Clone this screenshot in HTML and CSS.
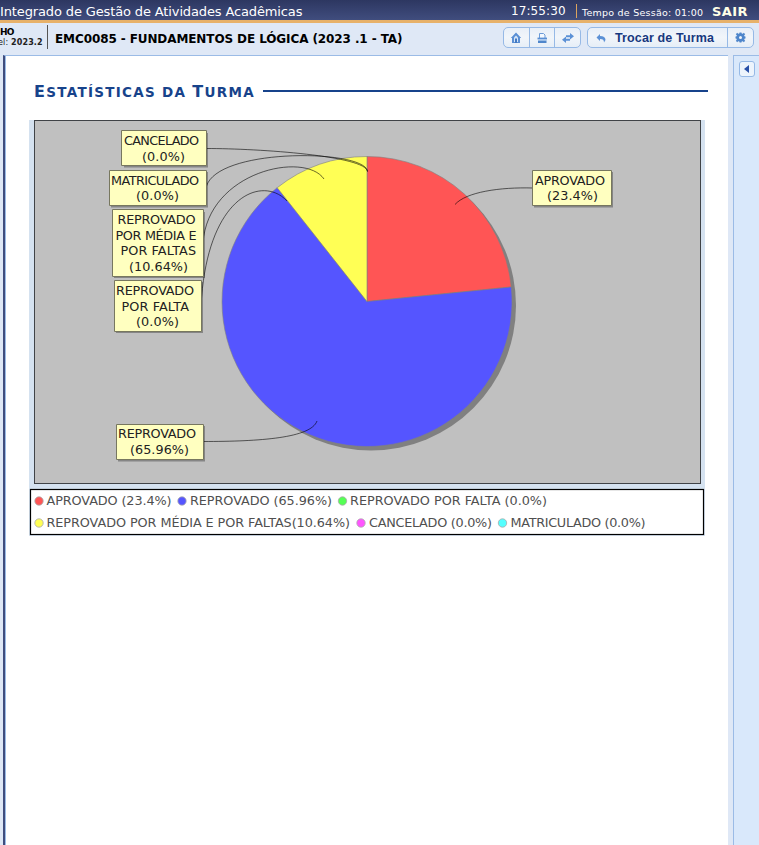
FILE: index.html
```html
<!DOCTYPE html>
<html lang="pt-BR">
<head>
<meta charset="utf-8">
<title>Estatísticas da Turma</title>
<link rel="stylesheet" href="styles.css">
</head>
<body>
<header class="topbar">
  <span class="system">Integrado de Gestão de Atividades Acadêmicas</span>
  <span class="clock">17:55:30</span>
  <span class="session">Tempo de Sessão: 01:00</span>
  <a class="logout">SAIR</a>
</header>
<div class="classbar">
  <div class="user"><b class="name">HO</b><span class="period">el: <b>2023.2</b></span></div>
  <h1 class="course">EMC0085 - FUNDAMENTOS DE LÓGICA (2023 .1 - TA)</h1>
  <div class="buttons tools">
    <a><svg width="12" height="12" viewBox="0 0 12 12"><path d="M6 .5 .8 6H2v5h8V6h1.200z" fill="#5a8fd4"/><path d="M6 3.500 4 5.500V10h4V5.500z" fill="#d5e5f8"/><path d="M5 6.500h2V11H5z" fill="#4279c2"/></svg></a>
    <a><svg width="12" height="12" viewBox="0 0 12 12"><path d="M3.500 6V1.500h4l1.500 1.500v3" fill="#f4f9ff" stroke="#6c9bd8"/><path d="M1.500 6.500h9.500" stroke="#5a8fd4" stroke-width="1.800"/><path d="M2 9.700h8.500" stroke="#4f86cb" stroke-width="2.600"/><path d="M2 8h8.500" stroke="#a8c7ec"/></svg></a>
    <a><svg width="14" height="12" viewBox="0 0 14 12"><path d="M5 5.200V3.200h4V1l4 3.200-4 3.200V5.200zM9 6.800v2H5V11L1 7.800l4-3.200v2.200z" fill="#5c91d6"/></svg></a>
  </div>
  <div class="buttons switch">
    <a class="change"><svg width="10" height="10" viewBox="0 0 10 10"><path d="M4 1v2c3.500 0 5.500 1.500 5.500 4L8 9.500C8 7 7 6 4 6v2L.5 4.500z" fill="#5c91d6"/></svg><span>Trocar de Turma</span></a>
    <a><svg width="11" height="11" viewBox="0 0 11 11"><circle cx="5.500" cy="5.500" r="2.900" fill="none" stroke="#4f86cb" stroke-width="2.800"/><path d="M5.500 .5v2M5.500 8.500v2M.5 5.500h2M8.500 5.500h2M1.500 1.500l1.500 1.500M8 8l1.500 1.500M9.500 1.500 8 3M3 8 1.500 9.500" stroke="#4f86cb" stroke-width="2"/></svg></a>
  </div>
</div>
<div class="workspace">
  <main>
    <div class="heading"><h2>E<span>statísticas da </span>T<span>urma</span></h2><i></i></div>
    <svg class="chart" width="676" height="416" viewBox="29 120 676 416">
      <defs><filter id="soft"><feGaussianBlur stdDeviation=".7"/></filter></defs>
      <rect x="29" y="120" width="676" height="416" fill="#d5e2f0"/>
      <rect x="34.500" y="120.500" width="666" height="363" fill="#c0c0c0" stroke="#404347"/>
      <circle cx="371" cy="305.500" r="145" fill="#808080"/>
      <g stroke="#808080" stroke-width=".6">
        <path d="M367 301.500V156.500A145 145 0 0 1 511.300 287z" fill="#f55"/>
        <path d="M367 301.500 511.300 287A145 145 0 1 1 277.200 187.700z" fill="#55f"/>
        <path d="M367 301.500 277.200 187.700A145 145 0 0 1 367 156.500z" fill="#ff5"/>
      </g>
      <g fill="none" stroke="#000" stroke-opacity=".65" stroke-width=".9">
        <path d="M206 148.500C260 148.500 366 156 367.500 171.500"/>
        <path d="M206 188C214 147 366 149 367.500 171.500"/>
        <path d="M203 243C208 171 305 151 324 179"/>
        <path d="M201 306C207 194 263 175 287 201"/>
        <path d="M203 441.500C260 441.500 311 438 317 421"/>
        <path d="M533 188C500 187 466 192 455 204.500"/>
      </g>
      <g fill="#000" opacity=".3" filter="url(#soft)">
        <path d="M124 133h84v34.500h-84zM111 172h97v35.500h-97zM114 212h91v66h-91zM116 282h87v51h-87zM118 426h87v35.500h-87zM534 172h79v35.500h-79z"/>
      </g>
      <g fill="#ffffc0" stroke="#77775f">
        <path d="M121.500 130.500h85v35h-85zM109.500 170.500h97v35h-97zM112.500 209.500h91v67h-91zM114.500 280.500h87v51h-87zM116.500 424.500h87v35h-87zM532.500 170.500h79v35h-79z"/>
      </g>
      <g class="labels">
        <text x="124" y="145" textLength="75">CANCELADO</text><text x="142" y="160.500" textLength="43">(0.0%)</text>
        <text x="111" y="184.500" textLength="88">MATRICULADO</text><text x="136" y="200" textLength="43">(0.0%)</text>
        <text x="117.500" y="224" textLength="78">REPROVADO</text><text x="115.500" y="239.500" textLength="81">POR MÉDIA E</text><text x="120.500" y="255" textLength="75.500">POR FALTAS</text><text x="129" y="270.500" textLength="59">(10.64%)</text>
        <text x="116" y="295" textLength="78">REPROVADO</text><text x="121.500" y="310.500" textLength="67.500">POR FALTA</text><text x="136" y="326" textLength="43">(0.0%)</text>
        <text x="118" y="438" textLength="78">REPROVADO</text><text x="130" y="453.500" textLength="59">(65.96%)</text>
        <text x="535" y="184.500" textLength="70">APROVADO</text><text x="547" y="200" textLength="51">(23.4%)</text>
      </g>
      <rect x="30.500" y="489.500" width="673" height="45" fill="#fff" stroke="#000" stroke-width="1.200"/>
      <g stroke="#aaa" stroke-width=".8">
        <circle cx="39" cy="501" r="4.200" fill="#f55"/><circle cx="182" cy="501" r="4.200" fill="#55f"/><circle cx="342.500" cy="501" r="4.200" fill="#5f5"/>
        <circle cx="39" cy="523" r="4.200" fill="#ff5"/><circle cx="361" cy="523" r="4.200" fill="#f5f"/><circle cx="502.500" cy="523" r="4.200" fill="#5ff"/>
      </g>
      <g class="legend">
        <text x="46.500" y="505" textLength="125">APROVADO (23.4%)</text><text x="190" y="505" textLength="142">REPROVADO (65.96%)</text><text x="350" y="505" textLength="197">REPROVADO POR FALTA (0.0%)</text>
        <text x="46.500" y="527" textLength="303.500">REPROVADO POR MÉDIA E POR FALTAS(10.64%)</text><text x="369" y="527" textLength="123">CANCELADO (0.0%)</text><text x="510.500" y="527" textLength="135">MATRICULADO (0.0%)</text>
      </g>
    </svg>
  </main>
  <aside><a class="collapse"><svg width="6" height="8" viewBox="0 0 6 8"><path d="M5 0v8L0 4z" fill="#2850a8"/></svg></a></aside>
</div>
</body>
</html>
```
FILE: styles.css
```css
* { box-sizing: border-box; }
body { margin: 0; width: 759px; height: 845px; overflow: hidden; background: #dfe8f6; font-family: "DejaVu Sans", sans-serif; color: #000; }
.topbar { display: flex; height: 23px; border-bottom: 3px solid #e7b16a; background: linear-gradient(#2d3761, #404d7e); color: #fff; line-height: 23px; white-space: nowrap; }
.system { width: 511px; font-size: 13px; letter-spacing: -.13px; }
.clock { width: 65px; font-size: 12px; letter-spacing: .1px; }
.session { width: 136px; height: 14px; margin-top: 4px; padding-left: 5px; border-left: 1px solid #dca45e; font-size: 9.500px; line-height: 17px; letter-spacing: .24px; }
.logout { font-size: 13px; font-weight: bold; letter-spacing: .4px; color: #ffffe6; }
.classbar { display: flex; height: 32px; white-space: nowrap; }
.user { width: 48px; height: 24px; margin-top: 2px; border-right: 1px solid #555; overflow: hidden; }
.name, .period { display: block; height: 11px; line-height: 14px; }
.name { font-size: 9px; letter-spacing: -.8px; }
.period { margin-left: -2px; font-size: 8px; line-height: 13px; letter-spacing: .15px; color: #222; }
.course { width: 448px; margin: 0; padding-left: 7px; font-size: 12px; line-height: 32px; letter-spacing: -.1px; }
.buttons { display: flex; height: 21px; margin-top: 4px; border: 1px solid #96b9e6; border-radius: 5px; background: linear-gradient(#e8eff8, #f1f5fa 50%, #e6eef7); }
.buttons a { display: flex; flex: 1; align-items: center; justify-content: center; }
.buttons a + a { border-left: 1px solid #96b9e6; }
.tools { width: 78px; margin-left: 7px; }
.switch { width: 167px; margin-left: 6px; }
.buttons .change { flex: 0 0 139px; justify-content: flex-start; padding-left: 8px; gap: 9px; color: #17387f; font: bold 12.500px "Liberation Sans", sans-serif; letter-spacing: .13px; }
.workspace { display: flex; height: 790px; padding-left: 3px; }
main { width: 725px; margin-right: 5px; padding-left: 23px; background: #fff; border: solid #9bbbe6; border-width: 1px 0 0 1px; border-left: 2px solid #404d7e; box-shadow: inset 1px 0 #9bbbe6; }
.heading { display: flex; align-items: center; height: 64px; margin-left: 6px; padding-top: 7px; }
h2 { width: 229px; margin: 0; color: #17438b; font-size: 16px; letter-spacing: 1.300px; white-space: nowrap; }
h2 span { font-size: 13.500px; text-transform: uppercase; }
.heading i { width: 445px; height: 2px; margin-top: -2px; background: #17438b; }
.chart { display: block; margin-left: 1px; }
.labels { font-size: 12.800px; fill: #222; }
.legend { font-size: 12.800px; fill: #505050; }
aside { width: 26px; padding: 5px 0 0 5px; border: solid #9bbbe6; border-width: 1px 0 0 1px; background: #d9e8fb; }
.collapse { display: flex; width: 16px; height: 16px; align-items: center; justify-content: center; border: 1px solid #96b9e6; border-radius: 3px; background: #edf4fc; }
```
